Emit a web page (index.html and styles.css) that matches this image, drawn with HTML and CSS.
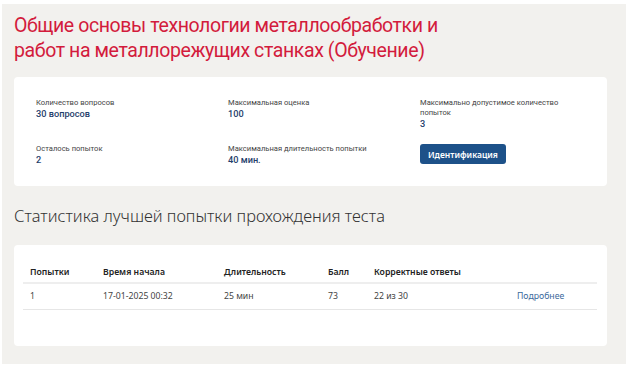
FILE: index.html
```html
<!DOCTYPE html>
<html lang="ru">
<head>
  <meta charset="UTF-8" />
  <title>Тест</title>
  <link rel="stylesheet" href="styles.css">
</head>
<body>
  <div class="page">
    <h1 class="title">Общие основы технологии металлообработки и<br>работ на металлорежущих станках (Обучение)</h1>

    <div class="card info">
      <div class="item">
        <div class="label">Количество вопросов</div>
        <div class="value">30 вопросов</div>
      </div>
      <div class="item">
        <div class="label">Максимальная оценка</div>
        <div class="value">100</div>
      </div>
      <div class="item narrow">
        <div class="label">Максимально допустимое количество попыток</div>
        <div class="value">3</div>
      </div>
      <div class="item">
        <div class="label">Осталось попыток</div>
        <div class="value">2</div>
      </div>
      <div class="item">
        <div class="label">Максимальная длительность попытки</div>
        <div class="value">40 мин.</div>
      </div>
      <div class="item">
        <button class="btn">Идентификация</button>
      </div>
    </div>

    <h2 class="subtitle">Статистика лучшей попытки прохождения теста</h2>

    <div class="card stats">
      <table>
        <tr>
          <th class="c1">Попытки</th>
          <th class="c2">Время начала</th>
          <th class="c3">Длительность</th>
          <th class="c4">Балл</th>
          <th class="c5">Корректные ответы</th>
          <th></th>
        </tr>
        <tr>
          <td>1</td>
          <td>17-01-2025 00:32</td>
          <td>25 мин</td>
          <td>73</td>
          <td>22 из 30</td>
          <td><a href="#">Подробнее</a></td>
        </tr>
      </table>
    </div>
  </div>
</body>
</html>
```

FILE: styles.css
```css
* {
  box-sizing: border-box;
}
body {
  margin: 0;
  background: #fff;
  font-family: 'Noto Sans', sans-serif;
  color: #333;
}
.page {
  width: 624px;
  margin: 4px 0 0 2px;
  padding: 9px 19px 18px 12px;
  background: #f2f1ee;
}
.title {
  margin: 0 0 14px;
  font-family: Roboto, sans-serif;
  font-weight: 400;
  font-size: 19.5px;
  letter-spacing: -0.4px;
  line-height: 25px;
  color: #d31b3c;
}
.card {
  background: #fff;
  border-radius: 4px;
}
.info {
  display: grid;
  grid-template-columns: 192px 192px 1fr;
  row-gap: 14px;
  padding: 21px 22px 20px;
  height: 109px;
  align-content: start;
}
.narrow {
  max-width: 145px;
}
.label {
  font-family: Roboto, sans-serif;
  font-size: 7.6px;
  line-height: 10px;
  color: #444;
}
.value {
  font-family: Roboto, sans-serif;
  font-size: 9.2px;
  line-height: 12px;
  font-weight: 500;
  color: #1f3e6b;
}
.btn {
  display: block;
  height: 20px;
  padding: 0 8px;
  border: none;
  border-radius: 3px;
  background: #1d5189;
  color: #fff;
  font-family: 'Noto Sans', sans-serif;
  font-size: 8.5px;
  font-weight: 600;
}
.subtitle {
  margin: 19px 0 18px 0;
  font-weight: 300;
  font-size: 16.4px;
  line-height: 22px;
  color: #333;
}
.stats {
  padding: 17px 10px 36px 9px;
}
table {
  width: 100%;
  border-collapse: collapse;
  font-size: 8.7px;
}
th {
  text-align: left;
  font-weight: 600;
  color: #222;
  padding: 4px 7px;
  border-bottom: 2px solid #eee;
  height: 21px;
}
td {
  padding: 4px 7px;
  height: 26px;
  border-bottom: 1px solid #e6e6e6;
  color: #444;
}
.c1 { width: 73px; }
.c2 { width: 121px; }
.c3 { width: 104px; }
.c4 { width: 46px; }
.c5 { width: 143px; }
a {
  color: #3b6a9c;
  text-decoration: none;
}
```
